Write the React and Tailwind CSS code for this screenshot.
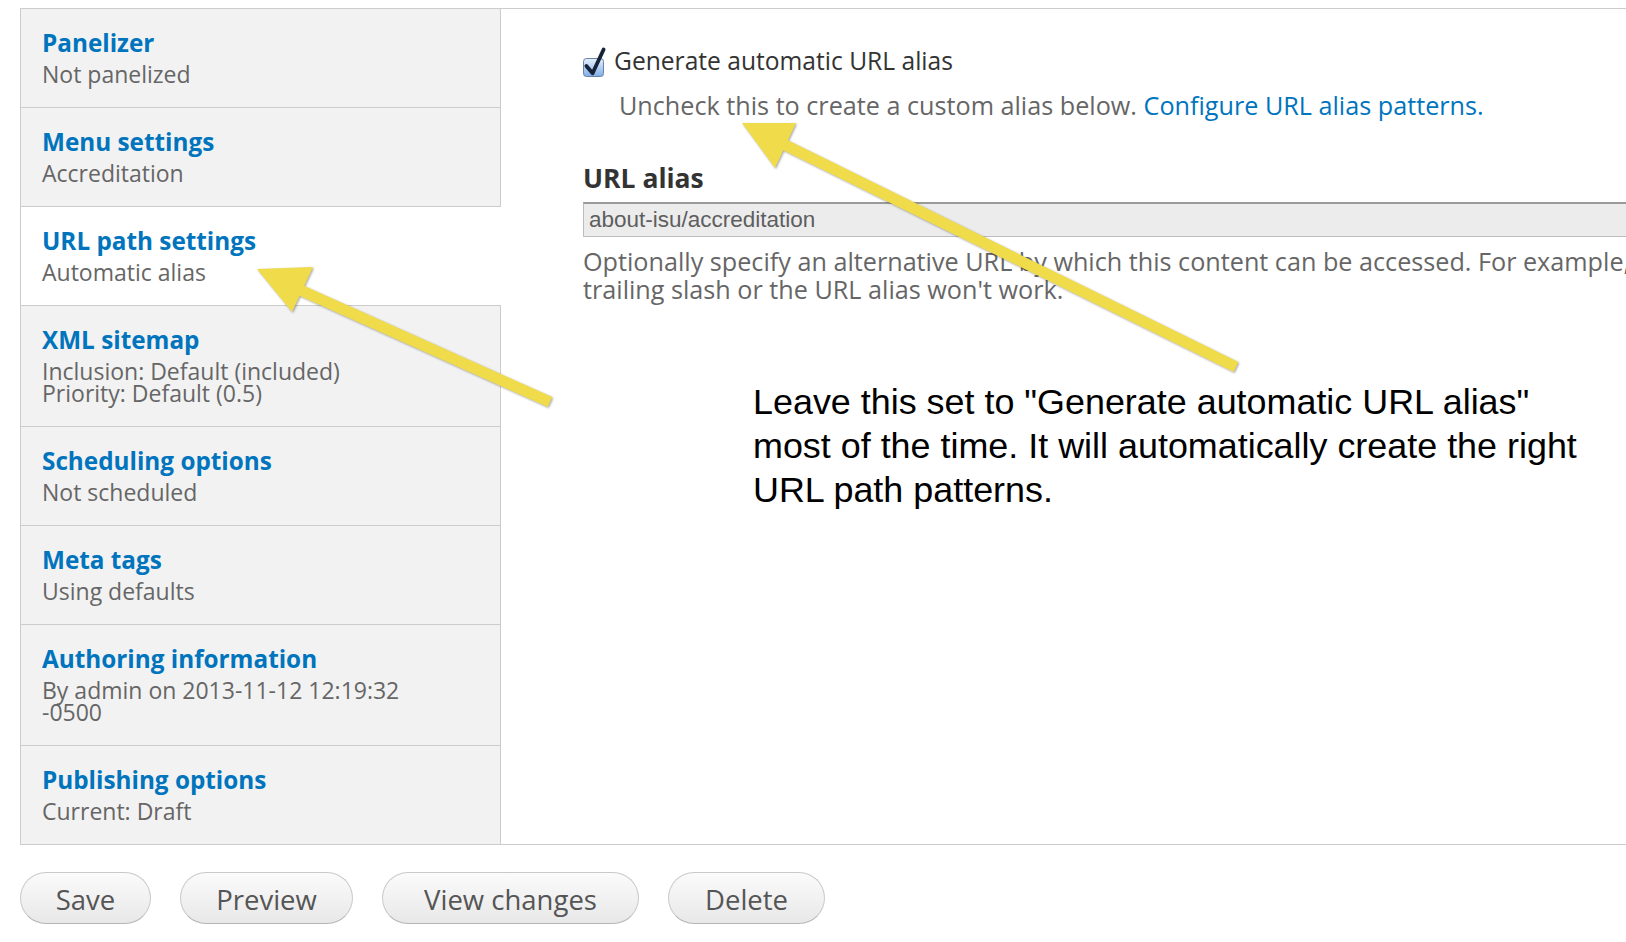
import React from "react";

const tabs = [
  { title: "Panelizer", lines: ["Not panelized"] },
  { title: "Menu settings", lines: ["Accreditation"] },
  { title: "URL path settings", lines: ["Automatic alias"], active: true },
  { title: "XML sitemap", lines: ["Inclusion: Default (included)", "Priority: Default (0.5)"] },
  { title: "Scheduling options", lines: ["Not scheduled"] },
  { title: "Meta tags", lines: ["Using defaults"] },
  { title: "Authoring information", lines: ["By admin on 2013-11-12 12:19:32", "-0500"] },
  { title: "Publishing options", lines: ["Current: Draft"] },
];

const buttons = [
  { label: "Save", w: "w-[131px]" },
  { label: "Preview", w: "w-[173px]" },
  { label: "View changes", w: "w-[257px]" },
  { label: "Delete", w: "w-[157px]" },
];

const TabItem = ({ title, lines, active, last }) => (
  <div
    className={`pl-[21px] pt-[18px] pb-[22px] border-[#cccccc] ${last ? "" : "border-b"} ${
      active ? "bg-white" : "bg-[#f2f2f2] border-r"
    }`}
  >
    <div className="text-[24.3px] leading-[32px] font-bold text-[#0074bd]">{title}</div>
    <div className="mt-[4px] text-[23px] leading-[22px] text-[#666666]">
      {lines.map((l) => (
        <div key={l}>{l}</div>
      ))}
    </div>
  </div>
);

const CheckedBox = () => (
  <svg width="22" height="30" viewBox="0 0 22 30" className="shrink-0 mt-[2px] overflow-visible">
    <defs>
      <linearGradient id="cb" x1="0" y1="0" x2="0" y2="1">
        <stop offset="0" stopColor="#e6f0fc" />
        <stop offset="0.5" stopColor="#b3d0f3" />
        <stop offset="1" stopColor="#80ade6" />
      </linearGradient>
    </defs>
    <rect x="0.5" y="11.5" width="20" height="18" rx="3" fill="url(#cb)" stroke="#6a82a4" />
    <path d="M3.4 19 L9.6 26.2 L20.6 2.5" fill="none" stroke="#172338" strokeWidth="3.8" strokeLinecap="round" strokeLinejoin="round" />
  </svg>
);

const Arrows = () => (
  <svg
    className="absolute inset-0 pointer-events-none drop-shadow-[1px_1.5px_1px_rgba(0,0,0,0.35)]"
    width="1626"
    height="942"
    viewBox="0 0 1626 942"
  >
    <g fill="#f0dc4a">
      <polygon points="552.3,397.0 547.7,407.0 297.7,295.0 302.3,285.0" />
      <polygon points="257,269 313,267 292,312" />
      <polygon points="1238.4,362.1 1233.6,371.9 780.6,148.9 785.4,139.1" />
      <polygon points="742,123 796,123 775,168" />
    </g>
  </svg>
);

export default function App() {
  return (
    <div className="relative w-[1626px] h-[942px] overflow-hidden bg-white font-['Open_Sans',sans-serif]">
      <div className="pt-[8px] pl-[20px]">
        <div className="flex w-[1700px] border-y border-l border-[#cccccc]">
          <div className="w-[480px] shrink-0 flex flex-col">
            {tabs.map((t, i) => (
              <TabItem key={t.title} {...t} last={i === tabs.length - 1} />
            ))}
          </div>
          <div className="flex-1 min-w-0 pl-[82px] pt-[36px] bg-white">
            <div className="flex items-start gap-[9px]">
              <CheckedBox />
              <span className="text-[24.6px] leading-[32px] text-[#333333]">Generate automatic URL alias</span>
            </div>
            <p className="mt-[12px] pl-[36px] text-[25.2px] leading-[32px] text-[#666666]">
              Uncheck this to create a custom alias below.{" "}
              <span className="text-[#0074bd]">Configure URL alias patterns.</span>
            </p>
            <div className="mt-[41px] text-[26.5px] leading-[32px] font-bold text-[#333333]">URL alias</div>
            <div className="mt-[8px] w-[1200px] h-[35px] flex items-center pl-[5px] bg-[#ececec] border border-[#bdbdbd] border-t-[#9a9a9a] border-t-2 font-['Liberation_Sans',Arial,sans-serif] text-[22.5px] text-[#5e5e5e]">
              about-isu/accreditation
            </div>
            <p className="mt-[10px] text-[25.2px] leading-[28px] text-[#666666]">
              <span className="block whitespace-nowrap">
                Optionally specify an alternative URL by which this content can be accessed. For example, type "about"
                when writing an about page. Use a relative path and don't add a
              </span>
              trailing slash or the URL alias won't work.
            </p>
          </div>
        </div>
        <div className="mt-[27px] flex gap-[29px]">
          {buttons.map((b) => (
            <div
              key={b.label}
              className={`${b.w} h-[52px] flex items-center justify-center rounded-full border border-[#c9c9c9] border-b-[#b5b5b5] bg-gradient-to-b from-[#fbfbfb] to-[#e8e8e8] text-[27.5px] text-[#555555] pt-[4px]`}
            >
              {b.label}
            </div>
          ))}
        </div>
      </div>

      <Arrows />

      <p className="absolute left-[753px] top-[380px] w-[845px] font-['Liberation_Sans',Arial,sans-serif] text-[35.9px] leading-[44px] text-black">
        Leave this set to "Generate automatic URL alias" most of the time. It will automatically create the right URL
        path patterns.
      </p>
    </div>
  );
}
